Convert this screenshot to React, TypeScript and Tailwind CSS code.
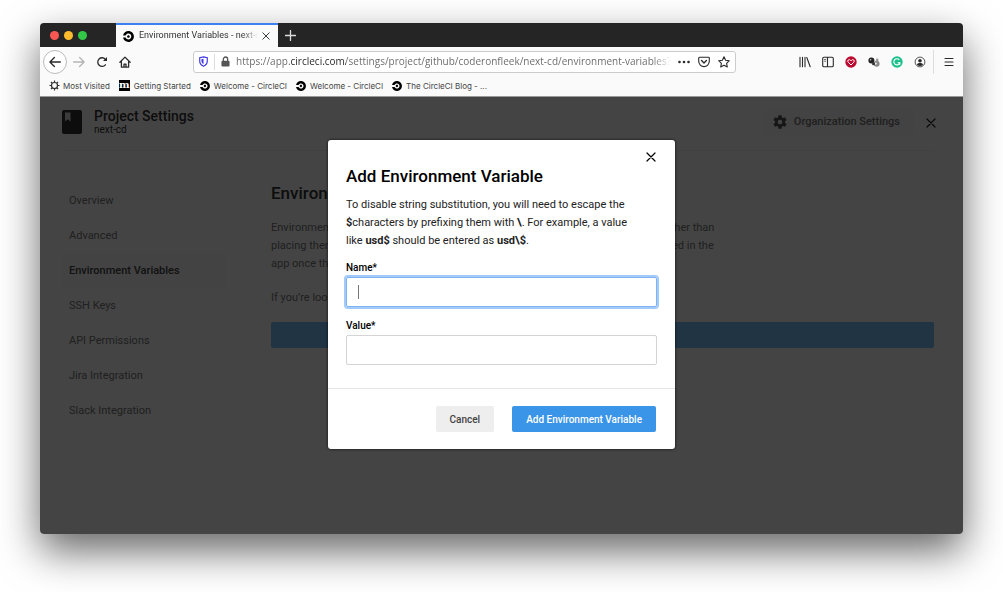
import React from "react";
import { SiCircleci } from "react-icons/si";

const navItems = [
  "Overview",
  "Advanced",
  "Environment Variables",
  "SSH Keys",
  "API Permissions",
  "Jira Integration",
  "Slack Integration",
];

const stroke = {
  fill: "none",
  stroke: "currentColor",
  strokeWidth: 1.3,
  strokeLinecap: "round" as const,
  strokeLinejoin: "round" as const,
};

function Cross({ className }: { className: string }) {
  return (
    <svg viewBox="0 0 10 10" className={className} {...stroke} strokeWidth={1.2} aria-hidden="true">
      <path d="M1 1l8 8M9 1l-8 8" />
    </svg>
  );
}

function Gear({ className }: { className: string }) {
  return (
    <svg viewBox="0 0 24 24" className={className} fill="currentColor" aria-hidden="true">
      <path d="M19.43 12.98c.04-.32.07-.64.07-.98s-.03-.66-.07-.98l2.11-1.65c.19-.15.24-.42.12-.64l-2-3.46c-.12-.22-.39-.3-.61-.22l-2.49 1c-.52-.4-1.08-.73-1.69-.98l-.38-2.65A.49.49 0 0 0 14 2h-4c-.25 0-.46.18-.49.42l-.38 2.65c-.61.25-1.17.59-1.69.98l-2.49-1c-.23-.09-.49 0-.61.22l-2 3.46c-.13.22-.07.49.12.64l2.11 1.65c-.04.32-.07.65-.07.98s.03.66.07.98l-2.11 1.65c-.19.15-.24.42-.12.64l2 3.46c.12.22.39.3.61.22l2.49-1c.52.4 1.08.73 1.69.98l.38 2.65c.03.24.24.42.49.42h4c.25 0 .46-.18.49-.42l.38-2.65c.61-.25 1.17-.59 1.69-.98l2.49 1c.23.09.49 0 .61-.22l2-3.46c.12-.22.07-.49-.12-.64l-2.11-1.65zM12 15.5a3.5 3.5 0 1 1 0-7 3.5 3.5 0 0 1 0 7z" />
    </svg>
  );
}

function TabStrip() {
  return (
    <div className="flex h-6 items-stretch bg-[#252525]">
      <div className="flex w-[76px] items-center gap-[5px] pl-[10px]">
        <span className="size-[9px] rounded-full bg-[#fc5753]" />
        <span className="size-[9px] rounded-full bg-[#fdbc2e]" />
        <span className="size-[9px] rounded-full bg-[#33c748]" />
      </div>
      <div className="flex w-[162px] items-center border-t-2 border-[#3b82f0] bg-[#fafafa] pl-[7px] pr-2">
        <SiCircleci className="size-[11px] shrink-0 text-black" />
        <span className="ml-[5px] w-[119px] overflow-hidden whitespace-nowrap text-[9px] text-[#333] [mask-image:linear-gradient(to_right,#000_86%,transparent)]">
          Environment Variables - next-cd
        </span>
        <button aria-label="Close tab" className="ml-auto text-[#333]">
          <Cross className="size-2" />
        </button>
      </div>
      <button aria-label="New tab" className="ml-[7px] text-[#ddd]">
        <svg viewBox="0 0 11 11" className="size-[11px]" {...stroke} aria-hidden="true">
          <path d="M5.5 .5v10M.5 5.5h10" />
        </svg>
      </button>
    </div>
  );
}

function Toolbar() {
  return (
    <div className="flex h-[29px] items-center bg-[#fafafa] pl-[3px] pr-[9px] text-[#2a2a2a]">
      <div className="flex items-center">
        <button aria-label="Back" className="flex size-6 items-center justify-center rounded-full border border-[#bbb] bg-white">
          <svg viewBox="0 0 12 12" className="size-3" {...stroke} aria-hidden="true">
            <path d="M11.3 6H1M5.4 1.5L.9 6l4.5 4.5" />
          </svg>
        </button>
        <button aria-label="Forward" className="flex h-6 w-[23px] items-center justify-center text-[#b4b4b4]">
          <svg viewBox="0 0 12 12" className="size-3" {...stroke} aria-hidden="true">
            <path d="M.7 6H11M6.6 1.5L11.1 6l-4.5 4.5" />
          </svg>
        </button>
        <button aria-label="Reload" className="flex size-6 items-center justify-center">
          <svg viewBox="0 0 12 12" className="size-3" {...stroke} aria-hidden="true">
            <path d="M9.4 8.8A4.3 4.3 0 1 1 9.3 3.2L10.3 4.2" />
            <path d="M11 1v4H7z" fill="currentColor" stroke="none" />
          </svg>
        </button>
        <button aria-label="Home" className="flex h-6 w-[22px] items-center justify-center">
          <svg viewBox="0 0 12 12" className="size-3" {...stroke} aria-hidden="true">
            <path d="M.9 6.3L6 1.1l5.1 5.2M2.4 5.5v5.7h7.2V5.5M5 11V8.2h2V11" />
          </svg>
        </button>
      </div>
      <div className="w-[57px] shrink-0" />
      <div className="flex h-[22px] min-w-0 flex-1 items-center rounded-[3px] border border-[#ccc] bg-white px-[5px]">
        <svg viewBox="0 0 10 12" className="h-[11px] w-[9px] shrink-0 text-[#4038e0]" aria-hidden="true">
          <path d="M5 .8l4.2 1v3.7C9.2 8.3 7.5 10.3 5 11.3 2.5 10.3.8 8.3.8 5.5V1.8z" fill="none" stroke="currentColor" strokeWidth="1.3" />
          <path d="M5 2.9v6.2C3.6 8.3 2.7 7 2.7 5.3V3.4z" fill="currentColor" />
        </svg>
        <span className="ml-[6px] h-4 w-px shrink-0 bg-[#ddd]" />
        <svg viewBox="0 0 10 12" className="ml-[6px] h-[11px] w-[9px] shrink-0 text-[#555]" aria-hidden="true">
          <path d="M2.6 6V3.4a2.4 2.4 0 0 1 4.8 0V6" fill="none" stroke="currentColor" strokeWidth="1.4" />
          <rect x=".5" y="5.2" width="9" height="6.3" rx="1" fill="currentColor" />
        </svg>
        <input
          aria-label="Address"
          readOnly
          className="ml-[6px] min-w-0 flex-1 bg-[linear-gradient(to_right,#666_54px,#222_54px,#222_110px,#666_110px,#666_calc(100%-18px),transparent)] bg-clip-text font-['Open_Sans',sans-serif] text-[10px] text-transparent outline-none"
          defaultValue="https://app.circleci.com/settings/project/github/coderonfleek/next-cd/environment-variables?next"
        />
        <button aria-label="Page actions" className="ml-[7px]">
          <svg viewBox="0 0 12 4" className="h-1 w-3" fill="currentColor" aria-hidden="true">
            <circle cx="1.5" cy="2" r="1.3" />
            <circle cx="6" cy="2" r="1.3" />
            <circle cx="10.5" cy="2" r="1.3" />
          </svg>
        </button>
        <button aria-label="Save to Pocket" className="ml-2">
          <svg viewBox="0 0 12 12" className="size-3" {...stroke} strokeWidth={1.1} aria-hidden="true">
            <path d="M1.5 1.3h9a.8.8 0 0 1 .8.8v3.2a5.3 5.3 0 0 1-10.6 0V2.1a.8.8 0 0 1 .8-.8z" />
            <path d="M3.6 4.6L6 6.9l2.4-2.3" strokeWidth="1.4" />
          </svg>
        </button>
        <button aria-label="Bookmark this page" className="ml-2">
          <svg viewBox="0 0 12 12" className="size-3" {...stroke} strokeWidth={1.1} aria-hidden="true">
            <path d="M6 .8l1.6 3.4 3.7.5-2.7 2.6.7 3.7L6 9.2 2.7 11l.7-3.7L.7 4.700l3.700-.5z" />
          </svg>
        </button>
      </div>
      <div className="w-[57px] shrink-0" />
      <div className="flex items-center">
        <button aria-label="Library" className="flex w-[23px] justify-center">
          <svg viewBox="0 0 12 12" className="size-3" {...stroke} strokeWidth={1.1} aria-hidden="true">
            <path d="M1 1.3v9.4M3.5 1.3v9.4M6 1.3v9.4M7.800 1.500l3.400 9.200" />
          </svg>
        </button>
        <button aria-label="Sidebars" className="flex w-[23px] justify-center">
          <svg viewBox="0 0 12 12" className="size-3" {...stroke} strokeWidth={1.1} aria-hidden="true">
            <rect x=".7" y="1.3" width="10.6" height="9.4" rx="1.3" />
            <path d="M5.5 1.5v9" />
            <path d="M2.5 3.5h1.2M2.5 5.2h1.2" strokeWidth=".7" />
          </svg>
        </button>
        <button aria-label="Favorites extension" className="flex w-[23px] justify-center">
          <svg viewBox="0 0 12 12" className="size-3" aria-hidden="true">
            <circle cx="6" cy="6" r="5.7" fill="#bd0a30" />
            <path d="M6 9L3.2 6.2a1.5 1.5 0 0 1 0-2.1 1.5 1.5 0 0 1 2.1 0L6 4.8l.7-.7a1.5 1.5 0 0 1 2.1 0 1.5 1.5 0 0 1 0 2.1z" fill="none" stroke="#fff" strokeWidth="1" />
          </svg>
        </button>
        <button aria-label="Spheres extension" className="flex w-[23px] justify-center">
          <svg viewBox="0 0 12 12" className="size-3" aria-hidden="true">
            <circle cx="3.4" cy="4.6" r="3" fill="#222" />
            <circle cx="2.6" cy="3.7" r=".8" fill="#ccc" />
            <circle cx="8.6" cy="7.8" r="3" fill="#888" />
            <circle cx="7.8" cy="7.6" r="1.1" fill="#eee" />
            <circle cx="9.2" cy="3.9" r="1.3" fill="#999" />
            <circle cx="5.5" cy="7.8" r="1.5" fill="#333" />
          </svg>
        </button>
        <button aria-label="Grammar extension" className="flex w-[23px] justify-center">
          <svg viewBox="0 0 12 12" className="size-3" aria-hidden="true">
            <circle cx="6" cy="6" r="5.7" fill="#1bbf8a" />
            <path d="M8.3 3.8A3.1 3.1 0 1 0 8.9 6.7H6.6M8.9 6.7v2" fill="none" stroke="#fff" strokeWidth="1.1" />
          </svg>
        </button>
        <button aria-label="Account" className="flex w-[23px] justify-center">
          <svg viewBox="0 0 12 12" className="size-3" aria-hidden="true">
            <circle cx="6" cy="6" r="4.9" fill="none" stroke="currentColor" strokeWidth=".8" />
            <circle cx="6" cy="4.7" r="1.8" fill="currentColor" />
            <path d="M2.9 8.7C3.6 7.4 4.7 7.1 6 7.1s2.4.3 3.1 1.6C8.3 9.5 7.2 9.9 6 9.9s-2.3-.4-3.1-1.2z" fill="currentColor" />
          </svg>
        </button>
        <span className="ml-[2px] h-6 w-px bg-[#ddd]" />
        <button aria-label="Menu" className="ml-[10px]">
          <svg viewBox="0 0 10 10" className="size-[10px]" {...stroke} strokeWidth={1.1} aria-hidden="true">
            <path d="M1 1.500h8M1 5h8M1 8.500h8" />
          </svg>
        </button>
      </div>
    </div>
  );
}

function Bookmarks() {
  const link = "flex items-center whitespace-nowrap";
  return (
    <nav aria-label="Bookmarks" className="flex h-[21px] items-center gap-[9px] border-b border-[#999] bg-[#fafafa] pb-px pl-[9px] font-['Inter',sans-serif] text-[8px] text-[#444]">
      <a href="#most-visited" className={link}>
        <svg viewBox="0 0 12 12" className="mr-[3px] size-[11px] text-[#333]" fill="none" stroke="currentColor" aria-hidden="true">
          <circle cx="6" cy="6" r="3.3" strokeWidth="1.3" />
          <path d="M6 .5v2M6 9.5v2M.5 6h2M9.5 6h2M2.1 2.1l1.4 1.4M8.5 8.5l1.4 1.4M9.900 2.100L8.500 3.500M3.500 8.500L2.100 9.900" strokeWidth="1.3" />
        </svg>
        Most Visited
      </a>
      <a href="#getting-started" className={link}>
        <span className="mr-1 flex size-[11px] items-center justify-center bg-black pb-[2px] font-['DejaVu_Serif',serif] text-[10px] font-bold leading-none text-white">
          m
        </span>
        Getting Started
      </a>
      {["Welcome - CircleCI", "Welcome - CircleCI", "The CircleCI Blog - ..."].map((label, i) => (
        <a href="#circleci" className={link} key={i}>
          <SiCircleci className="mr-1 size-[10px] text-black" />
          {label}
        </a>
      ))}
    </nav>
  );
}

function SettingsPage() {
  return (
    <div className="flex-1 bg-white pl-[22px] pr-[29px] text-[#333]">
      <header className="flex h-[54px] items-start border-b border-[#f4f4f4] pt-3">
        <svg viewBox="0 0 20 24" className="mt-px h-6 w-5" aria-hidden="true">
          <rect width="20" height="24" rx="2" fill="#333" />
          <path d="M3 2.5h5.5v9L5.8 9.3 3 11.500z" fill="#ddd" />
        </svg>
        <div className="ml-3">
          <h1 className="text-[14px] font-medium leading-[14px]">Project Settings</h1>
          <p className="text-[10px] leading-[14px]">next-cd</p>
        </div>
        <button className="ml-auto flex h-[26px] items-center rounded bg-[#f9f9f9] pl-2 pr-[14px] text-[11px] font-medium text-[#777]">
          <Gear className="mr-[6px] size-4 text-[#555]" />
          Organization Settings
        </button>
        <button aria-label="Close settings" className="ml-3 mr-[-2px] mt-[9px] text-[#222]">
          <Cross className="size-[10px]" />
        </button>
      </header>
      <div className="flex">
        <nav aria-label="Settings" className="w-[164px] shrink-0 pt-[33px]">
          {navItems.map((item) => (
            <a
              key={item}
              href={"#" + item.toLowerCase().replace(/ /g, "-")}
              className={
                item === "Environment Variables"
                  ? "flex h-[35px] items-center rounded bg-[#f9f9f9] px-[7px] text-[11px] font-medium text-[#444]"
                  : "flex h-[35px] items-center px-[7px] text-[11px] text-[#777]"
              }
            >
              {item}
            </a>
          ))}
        </nav>
        <main className="ml-[45px] min-w-0 flex-1 pt-8">
          <h2 className="text-[17px] font-medium leading-5">Environment Variables</h2>
          <div className="mt-4 max-w-[450px] text-[11px] leading-[18px] text-[#777]">
            <p>
              Environment variables let you add any sensitive data (e.g. API keys) to your jobs rather than
              placing them in the repository. The values of these variables cannot be read or edited in the
              app once they are set.
            </p>
            <p className="mt-4">
              If you’re looking to share environment variables across projects, try Contexts.
            </p>
          </div>
          <button className="mt-[15px] h-[26px] w-full rounded-[2px] bg-[#7cc4ff] text-[10px] font-medium text-white">
            Add Environment Variable
          </button>
        </main>
      </div>
    </div>
  );
}

function VariableDialog() {
  return (
    <form
      role="dialog"
      aria-modal="true"
      aria-labelledby="dialog-title"
      onSubmit={(e) => e.preventDefault()}
      className="w-[347px] rounded-[3px] bg-white text-black shadow-[0_0_3px_rgba(0,0,0,0.8)]"
    >
      <div className="px-[18px] pt-3">
        <div className="flex justify-end">
          <button type="button" aria-label="Close" className="mr-[1px]">
            <Cross className="size-[10px]" />
          </button>
        </div>
        <h2 id="dialog-title" className="mt-1 text-[17px] font-medium leading-5">
          Add Environment Variable
        </h2>
        <p className="mt-[10px] max-w-[295px] text-[11px] leading-[18px] text-[#222]">
          To disable string substitution, you will need to escape the <b>$</b>characters by prefixing them with{" "}
          <b>\</b>. For example, a value like <b>usd$</b> should be entered as <b>usd\$</b>.
        </p>
        <label htmlFor="name" className="mt-3 block text-[10px] font-medium leading-3">
          Name*
        </label>
        <div className="relative mt-[3px]">
          <input
            id="name"
            className="block h-[30px] w-full rounded-[2px] border border-[#7db2f5] px-3 text-[11px] caret-transparent outline-none ring-2 ring-[#a3cbfa]"
          />
          <span className="absolute left-3 top-2 h-[14px] w-px bg-[#777]" />
        </div>
        <label htmlFor="value" className="mt-[13px] block text-[10px] font-medium leading-3">
          Value*
        </label>
        <input
          id="value"
          className="mt-[3px] block h-[30px] w-full rounded-[2px] border border-[#d4d4d4] px-3 text-[11px] outline-none"
        />
      </div>
      <div className="mt-[23px] flex justify-end gap-[18px] border-t border-[#e6e6e6] py-[17px] pr-[19px] text-[10px] font-medium">
        <button type="button" className="h-[26px] rounded-[2px] bg-[#eee] px-[14px] text-[#444]">
          Cancel
        </button>
        <button type="submit" className="h-[26px] rounded-[2px] bg-[#3a94e7] px-[14px] text-white">
          Add Environment Variable
        </button>
      </div>
    </form>
  );
}

export default function App() {
  return (
    <div className="flex min-h-screen flex-col bg-white px-10 pb-[58px] pt-[23px] font-['Roboto',sans-serif]">
      <div className="flex flex-1 flex-col rounded shadow-[0_17px_40px_rgba(0,0,0,0.6)]">
        <div className="flex flex-1 flex-col overflow-hidden rounded">
          <TabStrip />
          <Toolbar />
          <Bookmarks />
          <div className="relative flex flex-1 flex-col">
            <SettingsPage />
            <div className="absolute inset-0 flex items-start justify-center bg-black/[0.733] pt-[43px]">
              <VariableDialog />
            </div>
          </div>
        </div>
      </div>
    </div>
  );
}
